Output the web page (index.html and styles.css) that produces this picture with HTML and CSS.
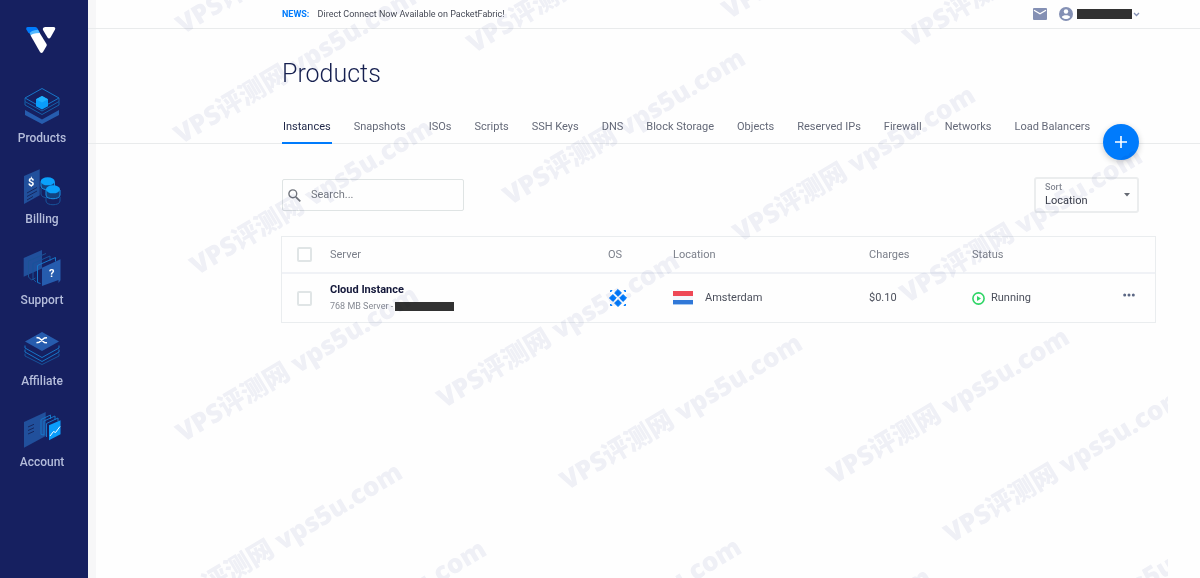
FILE: index.html
```
<!doctype html>
<html lang="en">
<head>
    <meta charset="utf-8">
    <meta name="viewport" content="width=device-width, initial-scale=1">
    <title>Products</title>
    <link rel="stylesheet" href="styles.css">
</head>
<body>
    <nav class="sidebar">
        <a href="#" class="logo" aria-label="Home">
            <svg width="30" height="26" viewBox="0 0 30 26">
                <path d="M2 0h7q1.500 0 2.300 1.300l2.700 4.700H2.500L.4 2.600Q-.4 0 2 0z" fill="#007bfc"/>
                <path d="M3.500 6.500Q4.500 3.500 12 2.700L14 6.500l-9 2.300z" fill="#51b9ff"/>
                <path d="M4.600 8.500Q6 6 13.700 6L20.500 17q.5 1 0 2l-3.500 6q-1.500 2-3 0z" fill="#fff"/>
                <path d="M19 0h8.500q2.400.4 1.500 2.500l-4.500 8q-1.500 2-3 0L17 3q-.8-2.500 2-3z" fill="#fff"/>
            </svg>
        </a>
        <a href="#" class="nav-item">
            <svg class="nav-icon" viewBox="0 0 38 38" fill="none">
                <path d="M2 23l17 9.500L36 23v5l-17 9L2 28z" fill="#265cae"/>
                <path d="M2 11L19 1.500 36 11l-17 9.500z" stroke="#1676c8"/>
                <path d="M2 11v3.500l17 9.500 17-9.500V11M2 14.500V18l17 9.500L36 18v-3.500" stroke="#1560aa"/>
                <path d="M19 9l6 3.300v7L19 22.500l-6-3.200v-7z" fill="#0a9dfb"/>
                <path d="M13 12.300l6 3.200 6-3.200L19 9z" fill="#1fb0ff"/>
            </svg>
            <span>Products</span>
        </a>
        <a href="#" class="nav-item">
            <svg class="nav-icon" viewBox="0 0 38 38" fill="none">
                <path d="M1 8l15.700-6.700v26L1 36z" fill="#21509c"/>
                <path d="M4 25l10-5.500M4 28.500L14 23M4 32l6-3.500" stroke="#15275f"/>
                <text x="5" y="18" class="icon-text">$</text>
                <path d="M18 20v6c0 5 13.500 5 13.500 0v-6M23 29v4c0 5 14 5 14 0v-4" stroke="#17539b"/>
                <path d="M18 14v4c0 5 13.500 5 13.500 0v-4M23 22v5c0 5 14 5 14 0v-5" fill="#13427f" stroke="#1791e8"/>
                <ellipse cx="24.700" cy="13.300" rx="7" ry="4" fill="#0aa1fb"/>
                <ellipse cx="30" cy="21.300" rx="7" ry="4" fill="#0aa1fb"/>
            </svg>
            <span>Billing</span>
        </a>
        <a href="#" class="nav-item">
            <svg class="nav-icon" viewBox="0 0 38 38" fill="none">
                <path d="M.7 9L19 1v18.500L.7 27.700z" fill="#21509c"/>
                <path d="M5.500 28V12L23 4.500M5.500 28l3 3 4-2" stroke="#1b5396"/>
                <path d="M10 30V14.500L27 7v5M10 30l3 3" stroke="#17539b"/>
                <path d="M14.500 33.500v-17L32.500 8.500v4M14.500 33.500l3 1" stroke="#1676c8"/>
                <path d="M19 18.700l18.500-8.400v21l-2 2.700v-3L19 37z" fill="#265cae"/>
                <text x="26" y="28" class="icon-text">?</text>
            </svg>
            <span>Support</span>
        </a>
        <a href="#" class="nav-item">
            <svg class="nav-icon" viewBox="0 0 38 38" fill="none">
                <path d="M2 15.500V18l17 9.500L36 18v-2.500" stroke="#1676c8"/>
                <path d="M2 19.500V22l17 9.500L36 22v-2.500" stroke="#1676c8"/>
                <path d="M2 23.500V26l17 8.500L36 26v-2.500" stroke="#17539b"/>
                <path d="M2 11.500L19 2l17 9.500L19 21z" fill="#265cae"/>
                <path d="M13.500 7.500l2.500.5 5.500 4.500 2.500.3M13.500 12.800l2.500-.5 5.500-4.300 2.500-.3" stroke="#fff" stroke-width="1.500"/>
            </svg>
            <span>Affiliate</span>
        </a>
        <a href="#" class="nav-item">
            <svg class="nav-icon" viewBox="0 0 38 38" fill="none">
                <path d="M1 11l21.700-10v24L1 36.700z" fill="#21509c"/>
                <path d="M5 16l6-2.700M5 19.500l6-2.700M5 23l6-2.700" stroke="#15275f"/>
                <path d="M18 8.500l9.500-4.500v4M18 8.500v15M21 24V10l11-5v4M21 24l-3-.5M23.500 26V12.500L35 7v3" stroke="#1676c8"/>
                <path d="M26 14.300l11.500-5v14L26 29.300z" fill="#0a9dfb"/>
                <path d="M27 25l3.500-4.500 2 1 4.500-6" stroke="#fff"/>
            </svg>
            <span>Account</span>
        </a>
    </nav>

    <div class="main">
        <header class="topbar">
            <p class="news"><a href="#">NEWS:</a> Direct Connect Now Available on PacketFabric!</p>
            <div class="user-tools">
                <button type="button" class="icon-btn" aria-label="Messages">
                    <svg width="14" height="12" viewBox="0 0 14 12">
                        <rect width="14" height="12" rx="1" fill="#8490b4"/>
                        <path d="M1 2.200l6 3.600 6-3.600" fill="none" stroke="#fff" stroke-width="1.300"/>
                    </svg>
                </button>
                <button type="button" class="icon-btn user-btn" aria-label="User menu">
                    <svg width="14" height="14" viewBox="0 0 14 14">
                        <circle cx="7" cy="7" r="7" fill="#8490b4"/>
                        <circle cx="7" cy="4.500" r="2.200" fill="#fff"/>
                        <path d="M2.800 9.900C3.800 7.700 10.200 7.700 11.200 9.900 9.200 12.700 4.800 12.700 2.800 9.900z" fill="#fff"/>
                    </svg>
                    <span class="redacted user-name"></span>
                    <svg width="7" height="5" viewBox="0 0 7 5"><path d="M1 1l2.500 2.500L6 1" fill="none" stroke="#8490b4" stroke-width="1.300"/></svg>
                </button>
            </div>
        </header>

        <h1>Products</h1>

        <div class="tabs-bar">
            <nav class="tabs">
                <a href="#" class="tab active">Instances</a>
                <a href="#" class="tab">Snapshots</a>
                <a href="#" class="tab">ISOs</a>
                <a href="#" class="tab">Scripts</a>
                <a href="#" class="tab">SSH Keys</a>
                <a href="#" class="tab">DNS</a>
                <a href="#" class="tab">Block Storage</a>
                <a href="#" class="tab">Objects</a>
                <a href="#" class="tab">Reserved IPs</a>
                <a href="#" class="tab">Firewall</a>
                <a href="#" class="tab">Networks</a>
                <a href="#" class="tab">Load Balancers</a>
            </nav>
            <button type="button" class="add-btn" aria-label="Deploy new server">
                <svg width="12" height="12" viewBox="0 0 12 12"><path d="M6 0v12M0 6h12" stroke="#fff" stroke-width="1.600"/></svg>
            </button>
        </div>

        <div class="filters">
            <label class="search">
                <svg width="13" height="13" viewBox="0 0 13 13" fill="none" stroke="#70747c">
                    <circle cx="4.800" cy="4.800" r="3.900" stroke-width="1.400"/>
                    <path d="M7.800 7.800l4.500 4.500" stroke-width="1.700"/>
                </svg>
                <input type="text" placeholder="Search..." aria-label="Search">
            </label>
            <div class="sort">
                <label for="sort">Sort</label>
                <select id="sort">
                    <option>Location</option>
                    <option>Label</option>
                    <option>Status</option>
                </select>
                <svg class="caret" width="6" height="4" viewBox="0 0 6 4"><path d="M0 0h6L3 3.500z" fill="#666a73"/></svg>
            </div>
        </div>

        <table class="servers">
            <thead>
                <tr>
                    <th class="col-check"><input type="checkbox" aria-label="Select all"></th>
                    <th>Server</th>
                    <th class="col-os">OS</th>
                    <th class="col-location">Location</th>
                    <th class="col-charges">Charges</th>
                    <th class="col-status">Status</th>
                    <th class="col-menu"></th>
                </tr>
            </thead>
            <tbody>
                <tr>
                    <td><input type="checkbox" aria-label="Select Cloud Instance"></td>
                    <td>
                        <a href="#" class="server-name">Cloud Instance</a>
                        <div class="server-info">768 MB Server - <span class="redacted server-ip"></span></div>
                    </td>
                    <td>
                        <svg class="os-icon" width="20" height="20" viewBox="0 0 20 20" fill="#007bfc" stroke="#007bfc" stroke-linejoin="round">
                            <path d="M10 1.500l3.400 3.400L10 8.300 6.600 4.900zM10 11.700l3.400 3.400-3.400 3.400-3.400-3.400zM4.900 6.600L8.300 10l-3.400 3.400L1.500 10zM15.100 6.600l3.400 3.400-3.400 3.400-3.400-3.400z"/>
                            <path d="M2.500 2.500h1.500L2.500 4zM17.500 2.500V4L16 2.500zM2.500 17.500V16L4 17.500zM17.500 17.500H16l1.500-1.500z"/>
                        </svg>
                    </td>
                    <td>
                        <div class="cell">
                            <svg width="20" height="14" viewBox="0 0 20 14">
                                <rect width="20" height="14" fill="#f4f6fb"/>
                                <rect width="20" height="5" fill="#ee4856"/>
                                <rect y="9" width="20" height="4" fill="#3078d8"/>
                                <rect y="13" width="20" height="1" fill="#a5c8f0"/>
                            </svg>
                            <span class="city">Amsterdam</span>
                        </div>
                    </td>
                    <td>$0.10</td>
                    <td>
                        <div class="cell">
                            <svg width="13" height="13" viewBox="0 0 13 13">
                                <circle cx="6.500" cy="6.500" r="5.600" fill="none" stroke="#2fd566" stroke-width="1.600"/>
                                <path d="M5 4l4 2.500L5 9z" fill="#2fd566"/>
                            </svg>
                            <span>Running</span>
                        </div>
                    </td>
                    <td>
                        <button type="button" class="icon-btn more-btn" aria-label="More">
                            <svg width="12" height="4" viewBox="0 0 12 4" fill="#5b6784"><circle cx="1.700" cy="2" r="1.500"/><circle cx="6" cy="2" r="1.500"/><circle cx="10.300" cy="2" r="1.500"/></svg>
                        </button>
                    </td>
                </tr>
            </tbody>
        </table>
    </div>

    <svg class="watermark" width="1168" height="578" aria-hidden="true">
        <defs>
            <text id="mark" transform="rotate(-31)" x="-6" y="2">VPS评测网 vps5u.com</text>
        </defs>
        <use href="#mark" x="187" y="30"/>
        <use href="#mark" x="478" y="49"/>
        <use href="#mark" x="733" y="15"/>
        <use href="#mark" x="914" y="43"/>
        <use href="#mark" x="185" y="140"/>
        <use href="#mark" x="514" y="201"/>
        <use href="#mark" x="744" y="238"/>
        <use href="#mark" x="201" y="271"/>
        <use href="#mark" x="911" y="299"/>
        <use href="#mark" x="448" y="404"/>
        <use href="#mark" x="187" y="438"/>
        <use href="#mark" x="571" y="486"/>
        <use href="#mark" x="838" y="480"/>
        <use href="#mark" x="955" y="539"/>
        <use href="#mark" x="171" y="615"/>
        <use href="#mark" x="255" y="692"/>
        <use href="#mark" x="510" y="690"/>
        <use href="#mark" x="700" y="720"/>
        <use href="#mark" x="999" y="675"/>
    </svg>
</body>
</html>
```
FILE: styles.css
```
* {
    box-sizing: border-box;
}
body {
    margin: 0;
    display: flex;
    min-height: 100vh;
    font-family: Roboto, "Liberation Sans", sans-serif;
    font-size: 11px;
    line-height: 16px;
    color: #4c505c;
    background-color: #fefefe;
}
a {
    color: inherit;
    text-decoration: none;
}
button {
    font: inherit;
    cursor: pointer;
}

/* sidebar */
.sidebar {
    flex: none;
    width: 88px;
    display: flex;
    flex-direction: column;
    align-items: center;
    background-color: #162060;
}
.logo {
    height: 87px;
    padding: 27px 0 0;
    margin-left: -6px;
}
.nav-item {
    display: flex;
    flex-direction: column;
    align-items: center;
    gap: 5px;
    width: 84px;
    height: 81px;
    margin-right: 4px;
    font-size: 12px;
    font-weight: 500;
    color: #b5bddb;
}
.nav-icon {
    width: 38px;
    height: 38px;
}
.icon-text {
    font-size: 11px;
    font-weight: 700;
    fill: #fff;
}

.main {
    flex: 1;
    min-width: 0;
    padding: 0 61px 0 186px;
    border-left: 8px solid #f7f7f8;
}

/* top bar */
.topbar {
    display: flex;
    justify-content: space-between;
    align-items: center;
    height: 29px;
    margin: 0 -61px 0 -194px;
    padding: 0 60px 0 194px;
    border-bottom: 1px solid #e9ebec;
}
.news {
    margin: 0;
    font-size: 9px;
    color: #454955;
}
.news a {
    margin-right: 6px;
    font-weight: 700;
    color: #007bfc;
}
.user-tools {
    display: flex;
    gap: 12px;
}
.icon-btn {
    display: flex;
    align-items: center;
    padding: 0;
    border: none;
    background: none;
}
.user-btn {
    gap: 4px;
}
.user-btn svg:last-child {
    margin-left: -3px;
}
.redacted {
    display: inline-block;
    background-color: #323232;
}
.user-name {
    width: 55px;
    height: 10px;
}

h1 {
    margin: 29px 0 0;
    font-size: 25px;
    font-weight: 300;
    line-height: 32px;
    color: #162050;
}

/* tabs */
.tabs-bar {
    position: relative;
    margin: 21px -61px 0 -194px;
    padding: 0 61px 0 194px;
    border-bottom: 1px solid #e9ebec;
}
.tabs {
    display: flex;
    gap: 21px;
}
.tab {
    height: 32px;
    padding: 8px 1px 0;
    white-space: nowrap;
    color: #646978;
}
.tab.active {
    color: #1f2748;
    margin-bottom: -1px;
    height: 33px;
    border-bottom: 2px solid #007bfc;
}
.add-btn {
    position: absolute;
    right: 61px;
    bottom: -17px;
    display: flex;
    align-items: center;
    justify-content: center;
    width: 36px;
    height: 36px;
    padding: 0;
    border: none;
    border-radius: 50%;
    background-color: #007bfc;
    box-shadow: 0 2px 6px rgba(0, 0, 0, 0.2);
}

/* search and sort */
.filters {
    display: flex;
    justify-content: space-between;
    align-items: center;
    margin-top: 33px;
}
.search {
    display: flex;
    align-items: center;
    gap: 10px;
    width: 182px;
    height: 32px;
    padding: 0 5px;
    border: 1px solid #dfe4e4;
    border-radius: 2px;
}
.search svg {
    flex: none;
}
.search input {
    width: 100%;
    padding: 0;
    border: none;
    outline: none;
    background: none;
    font: inherit;
    font-size: 11px;
}
.search input::placeholder {
    color: #777b84;
}
.sort {
    position: relative;
    width: 105px;
    height: 36px;
    border: 2px solid #ebedee;
    border-radius: 3px;
}
.sort label {
    position: absolute;
    top: 2px;
    left: 9px;
    font-size: 9px;
    line-height: 12px;
    font-weight: 500;
    color: #868a95;
}
.sort select {
    width: 100%;
    height: 100%;
    padding: 12px 9px 0;
    border: none;
    appearance: none;
    background: none;
    font: inherit;
    color: #383c49;
}
.caret {
    position: absolute;
    right: 7px;
    top: 14px;
}

/* server list */
.servers {
    width: calc(100% + 18px);
    margin: 23px -17px 0 -1px;
    border: 1px solid #eaedef;
    border-spacing: 0;
    table-layout: fixed;
}
.servers th,
.servers td {
    padding: 0;
    text-align: left;
    font-weight: 400;
}
.servers th {
    height: 37px;
    color: #7c808b;
    border-bottom: 2px solid #f0f2f6;
}
.servers td {
    height: 48px;
}
.col-check {
    width: 48px;
}
.col-os {
    width: 65px;
}
.col-location {
    width: 196px;
}
.col-charges {
    width: 103px;
}
.col-status {
    width: 151px;
}
.col-menu {
    width: 32px;
}
.servers input {
    display: block;
    width: 15px;
    height: 15px;
    margin: 0 0 0 15px;
    appearance: none;
    border: 2px solid #e0e5e6;
    border-radius: 2px;
    background-color: #fff;
}
.servers input:checked {
    background-color: #007bfc;
}
.server-name {
    font-weight: 700;
    color: #14183a;
}
.server-info {
    display: flex;
    align-items: center;
    gap: 2px;
    font-size: 9px;
    white-space: nowrap;
    color: #868a93;
}
.server-ip {
    width: 59px;
    height: 9px;
}
.os-icon {
    display: block;
}
.cell {
    display: flex;
    align-items: center;
    gap: 6px;
}
.city {
    margin-left: 6px;
}
.more-btn {
    height: 4px;
    margin-bottom: 6px;
}

/* repeated site mark laid over the page */
.watermark {
    position: absolute;
    top: 0;
    left: 0;
    pointer-events: none;
    mix-blend-mode: multiply;
    font-family: "Noto Sans", "Noto Sans CJK SC", sans-serif;
    font-size: 26px;
    font-weight: 900;
    fill: #f0f1f7;
}
```
